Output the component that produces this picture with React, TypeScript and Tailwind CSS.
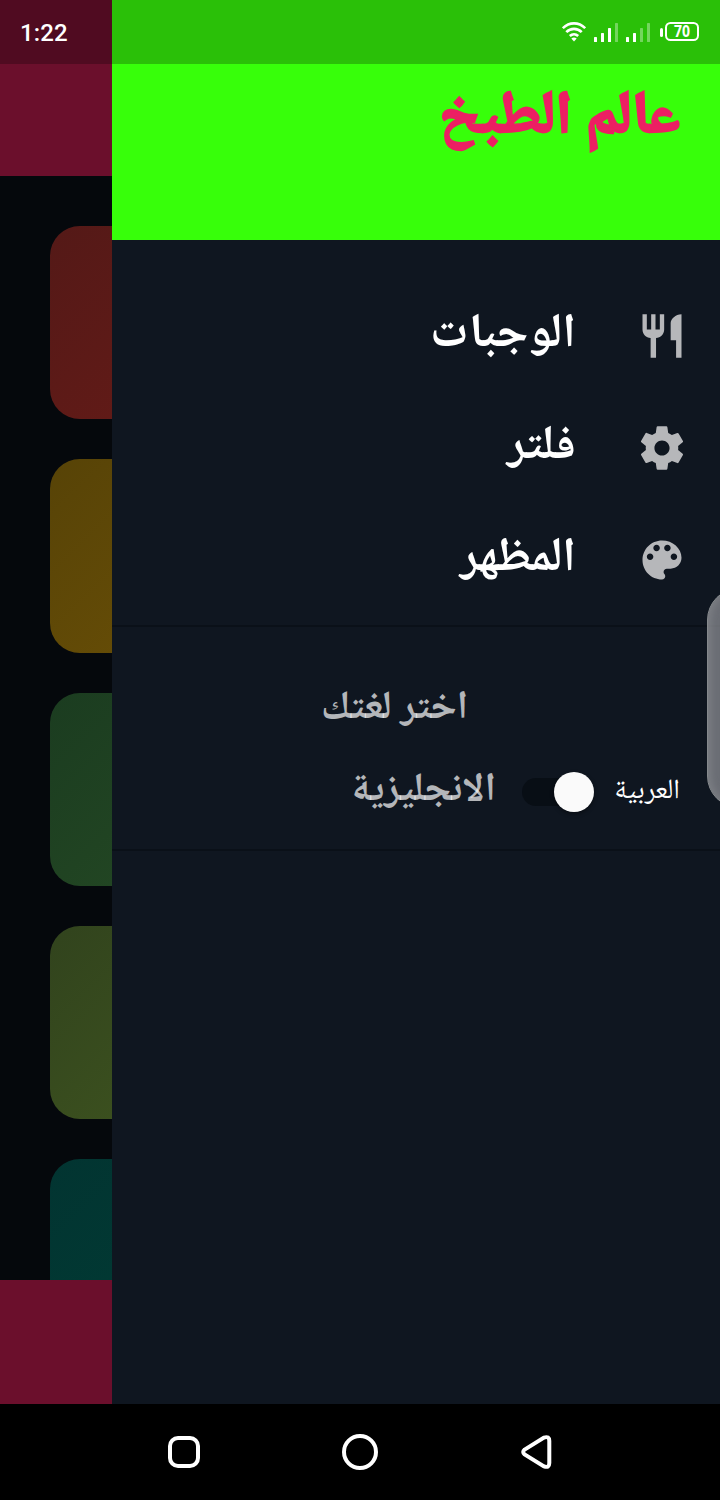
import { ReactNode } from "react";
import { MdRestaurant } from "react-icons/md";

const arabic = "font-['Noto_Naskh_Arabic_UI','Noto_Naskh_Arabic','DejaVu_Sans',serif]";

const cards = [
  "from-[#541917] to-[#671b17]",
  "from-[#574307] to-[#6b5006]",
  "from-[#1b3c20] to-[#254a24]",
  "from-[#31431d] to-[#40561f]",
  "from-[#023431] to-[#003d35]",
];

function Label({ text, width, height, size, baseline, className }: { text: string; width: number; height: number; size: number; baseline: number; className: string }) {
  return (
    <svg width={width} height={height} className={`shrink-0 overflow-visible ${arabic} ${className}`} fill="currentColor">
      <text x={width} y={baseline} direction="rtl" fontSize={size} textLength={width} lengthAdjust="spacingAndGlyphs">{text}</text>
    </svg>
  );
}

function MenuRow({ icon, children }: { icon: ReactNode; children: ReactNode }) {
  return (
    <li className="flex h-28 items-center pr-8">
      <span className="flex h-[52px] w-[52px] shrink-0 text-[#b6b7ba]">{icon}</span>
      <span className="mr-[60px] flex text-white">{children}</span>
    </li>
  );
}

function SettingsIcon() {
  return (
    <svg width="52" height="52" viewBox="0 0 24 24" fill="currentColor">
      <path d="M19.43 12.98c.04-.32.07-.64.07-.98s-.03-.66-.07-.98l2.11-1.65c.19-.15.24-.42.12-.64l-2-3.46c-.12-.22-.39-.3-.61-.22l-2.49 1c-.52-.4-1.08-.73-1.69-.98l-.38-2.65C14.46 2.18 14.25 2 14 2h-4c-.25 0-.46.18-.49.42l-.38 2.65c-.61.25-1.17.59-1.69.98l-2.49-1c-.23-.09-.49 0-.61.22l-2 3.46c-.13.22-.07.49.12.64l2.11 1.65c-.04.32-.07.65-.07.98s.03.66.07.98l-2.11 1.65c-.19.15-.24.42-.12.64l2 3.46c.12.22.39.3.61.22l2.49-1c.52.4 1.08.73 1.69.98l.38 2.65c.03.24.24.42.49.42h4c.25 0 .46-.18.49-.42l.38-2.65c.61-.25 1.17-.59 1.69-.98l2.49 1c.23.09.49 0 .61-.22l2-3.46c.12-.22.07-.49-.12-.64l-2.11-1.65zM12 15.5c-1.93 0-3.5-1.57-3.5-3.5s1.57-3.5 3.5-3.5 3.5 1.57 3.5 3.5-1.57 3.5-3.5 3.5z" />
    </svg>
  );
}

function PaletteIcon() {
  return (
    <svg width="52" height="52" viewBox="0 0 24 24" fill="currentColor">
      <path d="M12 3c-4.97 0-9 4.03-9 9s4.03 9 9 9c.83 0 1.5-.67 1.5-1.5 0-.39-.15-.74-.39-1.01-.23-.26-.38-.61-.38-.99 0-.83.67-1.5 1.5-1.5H16c2.76 0 5-2.24 5-5 0-4.42-4.03-8-9-8zm-5.5 9c-.83 0-1.5-.67-1.5-1.5S5.67 9 6.5 9 8 9.67 8 10.5 7.33 12 6.5 12zm3-4C8.67 8 8 7.33 8 6.5S8.67 5 9.5 5s1.5.67 1.5 1.5S10.33 8 9.5 8zm5 0c-.83 0-1.5-.67-1.5-1.5S13.67 5 14.5 5s1.5.67 1.5 1.5S15.33 8 14.5 8zm3 4c-.83 0-1.5-.67-1.5-1.5S16.67 9 17.5 9s1.5.67 1.5 1.5-.67 1.5-1.5 1.5z" />
    </svg>
  );
}

function Signal({ lit }: { lit: number }) {
  return (
    <svg width="24" height="19" fill="#fff">
      {[0, 1, 2, 3].map((i) => (
        <rect key={i} x={i * 7} y={[14, 10, 5, 0][i]} width="3" height={[5, 9, 14, 19][i]} rx=".6" opacity={i < lit ? 1 : 0.35} />
      ))}
    </svg>
  );
}

export default function App() {
  return (
    <div className="relative flex h-[1500px] w-[720px] flex-col overflow-hidden bg-black">
      <div className="flex h-[1404px]">
        <aside className="flex w-28 flex-col overflow-hidden bg-[#05080c]">
          <div className="h-16 shrink-0 bg-[#500b21] pl-5 pt-4 font-['Roboto',sans-serif] text-2xl font-medium leading-[34px] tracking-[0.15px] text-white">1:22</div>
          <div className="h-28 shrink-0 bg-[#6b0f2c]" />
          <div className="flex h-[1104px] shrink-0 flex-col gap-10 overflow-hidden pl-[50px] pt-[50px]">
            {cards.map((c) => (
              <div key={c} className={`h-[193.3px] w-[200px] shrink-0 rounded-[30px] bg-linear-to-br ${c}`} />
            ))}
          </div>
          <div className="h-[124px] shrink-0 bg-[#6b0f2c]" />
        </aside>

        <main dir="rtl" className="flex w-[608px] flex-col bg-[#0f1620]">
          <div dir="ltr" className="flex h-16 items-center justify-end bg-[#2ac008] pr-[21px]">
            <svg width="24" height="20" viewBox="0 0 24 20" fill="none" stroke="#fff" strokeWidth="2.6" className="mr-2">
              <path d="M.8 6.2C7.2-.3 16.8-.3 23.2 6.2M4.3 10.2c4.4-4.5 11-4.5 15.4 0M7.8 14c2.5-2.3 5.9-2.3 8.4 0" />
              <path d="M12 19.5 9.3 16.6q2.7-2.2 5.4 0z" fill="#fff" stroke="none" />
            </svg>
            <span className="mr-2 flex"><Signal lit={3} /></span>
            <span className="mr-2.5 flex"><Signal lit={2} /></span>
            <span className="mr-0.5 h-[9px] w-[3px] rounded-sm bg-white" />
            <svg width="34" height="21" className="overflow-visible font-['Open_Sans',sans-serif] font-bold">
              <rect x="1" y="1" width="32" height="17" rx="4.5" fill="none" stroke="#fff" strokeWidth="2" />
              <text x="9" y="15" fontSize="15.5" textLength="16" lengthAdjust="spacingAndGlyphs" fill="#fff">70</text>
            </svg>
          </div>

          <header className="flex h-44 items-start bg-[#37ff0a] pr-10 pt-5">
            <Label text="عالم الطبخ" width={241} height={70} size={60} baseline={56.5} className="stroke-[#ec1f63] stroke-[2.4px] font-bold text-[#ec1f63]" />
          </header>

          <ul className="flex h-[387px] flex-col border-b-2 border-[#0a1018] pt-10">
            <MenuRow icon={<MdRestaurant size={52} />}><Label text="الوجبات" width={146} height={60} size={48} baseline={47} className="font-bold" /></MenuRow>
            <MenuRow icon={<SettingsIcon />}><Label text="فلتر" width={69} height={60} size={48} baseline={47} className="font-bold" /></MenuRow>
            <MenuRow icon={<PaletteIcon />}><Label text="المظهر" width={116} height={60} size={48} baseline={47} className="font-bold" /></MenuRow>
          </ul>

          <section className="h-[224px] border-b-2 border-[#0a1018] pt-[58px]">
            <div className="flex h-[74px] pr-[252px]">
              <Label text="اختر لغتك" width={147} height={50} size={40} baseline={39} className="font-bold text-white/70" />
            </div>
            <div className="flex h-[66px] items-center pr-10">
              <Label text="العربية" width={66} height={40} size={28} baseline={30} className="text-white" />
              <span className="mr-5 flex h-10 w-[72px] shrink-0 items-center">
                <span className="z-10 h-10 w-10 shrink-0 rounded-full bg-[#fafafa] shadow-[0_2px_4px_#0006]" />
                <span className="-mr-5 h-7 w-[52px] shrink-0 rounded-l-full bg-[#080e15]" />
              </span>
              <div className="mr-[26px] flex"><Label text="الانجليزية" width={146} height={50} size={40} baseline={39} className="font-bold text-white/70" /></div>
            </div>
          </section>
        </main>
      </div>

      <nav className="flex h-24 items-center">
        <svg width="32" height="32" fill="none" stroke="#fff" strokeWidth="4" className="ml-[168px]"><rect x="2" y="2" width="28" height="28" rx="8" /></svg>
        <svg width="36" height="36" fill="none" stroke="#fff" strokeWidth="4" className="ml-[142px]"><circle cx="18" cy="18" r="16" /></svg>
        <svg width="32" height="36" fill="none" stroke="#fff" strokeWidth="4" className="ml-[142px]"><path d="M4.6 15.6L24 3.6Q29.3 1.8 29.3 7V29Q29.3 34.2 24 32.4L4.6 20.4Q1.8 18 4.6 15.6Z" /></svg>
      </nav>

      <div className="absolute -right-[51px] top-[588px] h-[220px] w-16 rounded-[32px] border border-[#85898c] bg-[#a8aaaf]/60 shadow-[inset_3px_0_7px_#8d909480]" />
    </div>
  );
}
